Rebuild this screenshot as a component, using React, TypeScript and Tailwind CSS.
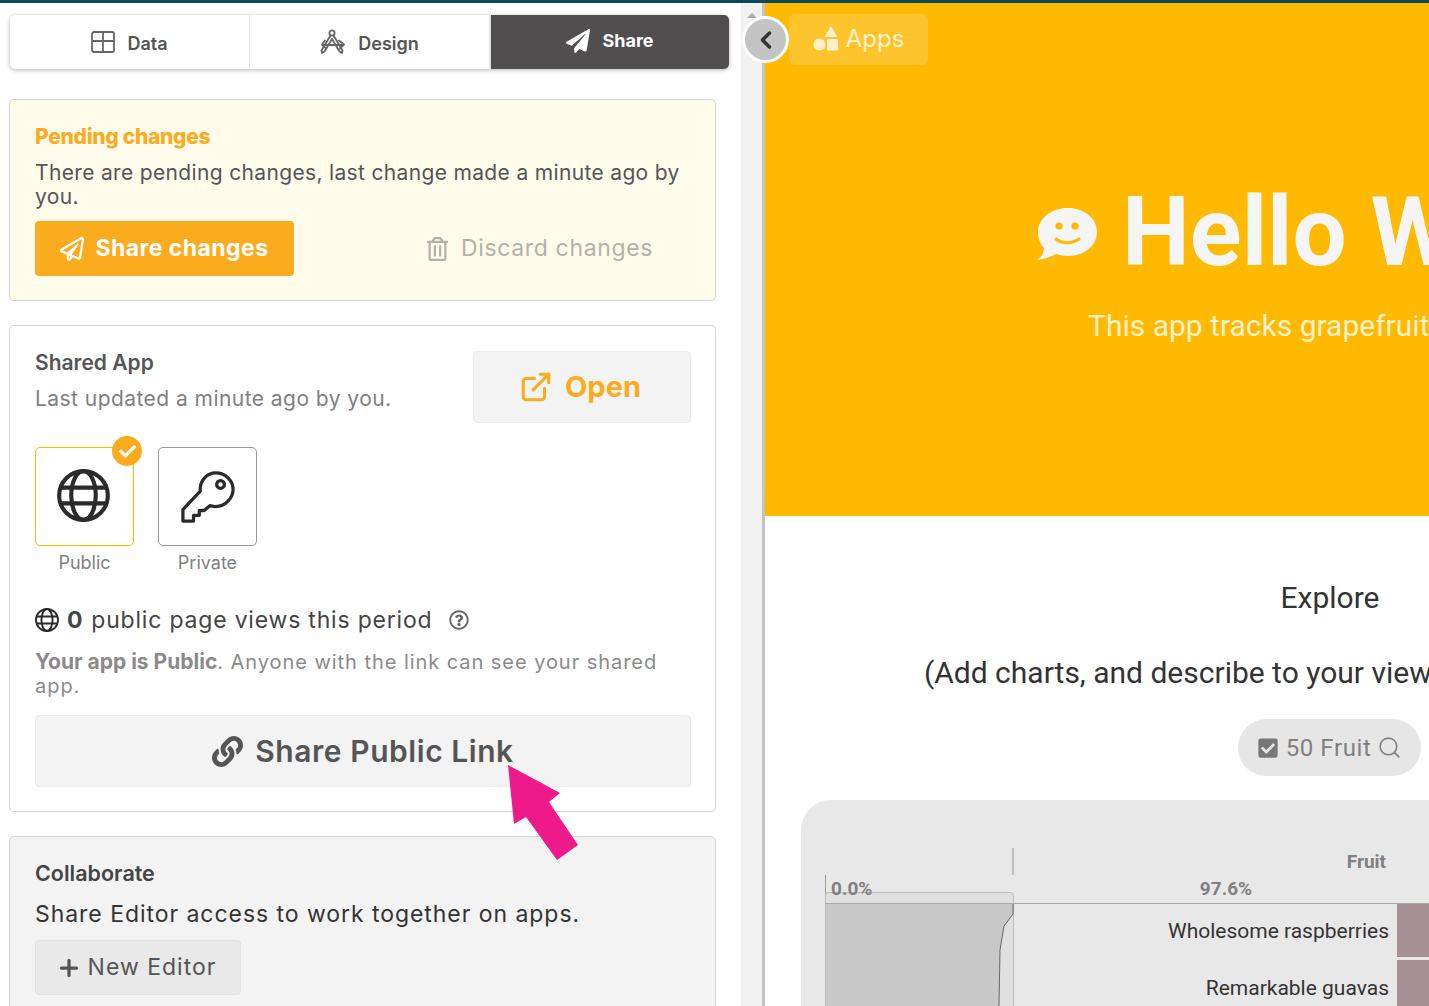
import { ChevronLeft, Search, Plus, ExternalLink } from 'lucide-react';
import { FaPaperPlane, FaRegPaperPlane, FaRegTrashAlt, FaLink, FaRegQuestionCircle, FaCheckSquare, FaCheck } from 'react-icons/fa';

const GlobeIcon = ({ className }: { className?: string }) => (
  <svg viewBox="0 0 54 54" className={className} fill="none" stroke="currentColor" strokeWidth="4.2">
    <circle cx="27" cy="27" r="24.800" />
    <ellipse cx="27" cy="27" rx="12.500" ry="24.800" />
    <path d="M4.500 19h45M4.500 35h45" />
  </svg>
);

const KeyIcon = () => (
  <svg viewBox="0 0 56 56" className="w-[54px] h-[54px] text-[#2b2b2b]" fill="none" stroke="currentColor" strokeWidth="3.4" strokeLinejoin="round">
    <path d="M20 22c-1-11 7-19 16-19 10 0 18 8 18 17s-8 18-18 18c-2 0-4-.5-6-1l-6 5h-5v5h-6v6H2V41z" />
    <circle cx="41" cy="15" r="4" />
  </svg>
);

const DesignIcon = () => (
  <svg viewBox="0 0 26 26" className="w-[26px] h-[26px] text-[#666]" fill="none" stroke="currentColor" strokeWidth="1.8" strokeLinejoin="round" strokeLinecap="round">
    <circle cx="12" cy="4" r="2.600" />
    <path d="M10.500 6.500 1.500 21.500l.5 2.500 2.500-1.500L12 10M13.500 6.500l9 15-.5 2.500-2.500-1.500L12 10M2.500 16h19M5 11.500 2 15.500l3 3M19 11.500l5 4-4 4" />
  </svg>
);

const TableIcon = () => (
  <svg viewBox="0 0 24 22" className="w-6 h-[22px] text-[#666]" fill="none" stroke="currentColor" strokeWidth="1.8">
    <rect x="1" y="1" width="22" height="20" rx="2" />
    <path d="M1 10h22M12 1v20" />
  </svg>
);

const AppsIcon = () => (
  <svg viewBox="0 0 26 26" className="w-[26px] h-[26px] text-[#fff1cc]" fill="currentColor">
    <path d="M18 0 24.500 11h-13z" />
    <circle cx="6.500" cy="18.500" r="6" />
    <rect x="14" y="13" width="11" height="11.500" rx="1" />
  </svg>
);

const SmileBubble = () => (
  <svg viewBox="0 0 60 52" className="mt-[3px] w-[60px] h-[52px]">
    <path fill="#f5f5f5" d="M31 0c16 0 29 10 29 24S47 48 31 48c-5 0-8-1-12-2-4 2-10 5-19 6 4-3 7-7 7-12C3 36 1 30 1 24 1 10 15 0 31 0z" />
    <circle cx="22" cy="18" r="3.600" fill="#ffb900" />
    <circle cx="38" cy="18" r="3.600" fill="#ffb900" />
    <path d="M19 31c6 5 16 5 23 0" fill="none" stroke="#ffb900" strokeWidth="3" strokeLinecap="round" />
  </svg>
);

function Tabs() {
  return (
    <div className="ml-[10px] mt-3 flex h-[54px] w-[719px] rounded-[5px] bg-white shadow-[0_1px_4px_rgba(0,0,0,0.3)]">
      <div className="flex w-[240px] items-center justify-center gap-3 border-r border-[#e4e4e4] text-[18px] font-semibold text-[#555]">
        <TableIcon />
        <span className="pt-[2px]">Data</span>
      </div>
      <div className="flex w-[241px] items-center justify-center gap-3 border-r-2 border-[#e4e4e4] text-[18px] font-semibold text-[#555]">
        <DesignIcon />
        <span className="pt-[2px]">Design</span>
      </div>
      <div className="flex flex-1 items-center justify-center gap-3 rounded-r-[5px] bg-[#504e4f] pb-[3px] text-[18px] font-bold text-white">
        <FaPaperPlane className="w-6 h-6" />
        <span>Share</span>
      </div>
    </div>
  );
}

function PendingCard() {
  return (
    <div className="ml-[9px] mt-[30px] h-[202px] w-[707px] rounded-[5px] border border-[#d8d4c8] bg-[#fffcec] pl-[25px] pr-[24px] pt-[24px]">
      <div className="text-[21px] leading-[26px] font-extrabold tracking-[-0.3px] text-[#faab1e]">Pending changes</div>
      <p className="mt-[11px] text-[21px] leading-[24px] tracking-[0.34px] text-[#555]">
        There are pending changes, last change made a minute ago by you.
      </p>
      <div className="mt-3 flex items-center">
        <div className="flex h-[55px] w-[259px] items-center justify-center gap-[11px] rounded-[4px] bg-[#faab1e] text-[23px] font-bold tracking-[0.45px] text-white">
          <FaRegPaperPlane className="w-6 h-6" />
          <span>Share changes</span>
        </div>
        <div className="ml-[133px] flex items-center gap-[13px] text-[23px] tracking-[0.65px] text-[#b3b1a9]">
          <FaRegTrashAlt className="w-[21px] h-[24px]" />
          <span>Discard changes</span>
        </div>
      </div>
    </div>
  );
}

function SharedCard() {
  return (
    <div className="ml-[9px] mt-6 h-[487px] w-[707px] rounded-[5px] border border-[#d5d5d5] bg-white pl-[25px] pr-[24px] pt-[25px]">
      <div className="flex justify-between">
        <div>
          <div className="text-[21px] leading-[24px] font-semibold text-[#555]">Shared App</div>
          <div className="mt-[12px] text-[21px] leading-[24px] tracking-[0.45px] text-[#808080]">Last updated a minute ago by you.</div>
        </div>
        <div className="flex h-[72px] w-[218px] items-center justify-center gap-3 rounded-[4px] border border-[#ececec] bg-[#f3f3f3] pr-1 text-[29px] font-bold text-[#faab1e]">
          <ExternalLink className="w-[34px] h-[34px]" strokeWidth={2.2} />
          <span>Open</span>
        </div>
      </div>

      <div className="mt-[24px] flex gap-6">
        <div className="flex w-[99px] flex-col items-center">
          <div className="relative flex h-[99px] w-[99px] items-center justify-center rounded-[5px] border border-amber-400 text-[#2b2b2b]">
            <GlobeIcon className="-ml-[2px] -mt-[2px] w-[53px] h-[53px]" />
            <div className="absolute -right-[9px] -top-[12px] flex h-[30px] w-[30px] items-center justify-center rounded-full bg-[#faab1e] text-white">
              <FaCheck className="w-[17px] h-[17px]" />
            </div>
          </div>
          <div className="mt-[6px] text-[18px] leading-[22px] text-[#808080]">Public</div>
        </div>
        <div className="flex w-[99px] flex-col items-center">
          <div className="flex h-[99px] w-[99px] items-center justify-center rounded-[5px] border border-[#999]">
            <KeyIcon />
          </div>
          <div className="mt-[6px] text-[18px] leading-[22px] text-[#808080]">Private</div>
        </div>
      </div>

      <div className="mt-[32px] flex h-[28px] items-center text-[23px] tracking-[0.8px] text-[#444]">
        <GlobeIcon className="w-6 h-6 text-[#2b2b2b]" />
        <span className="ml-2 font-bold">0</span>
        <span className="ml-[8px]">public page views this period</span>
        <FaRegQuestionCircle className="ml-[17px] w-5 h-5 text-[#666]" />
      </div>

      <p className="mt-[16px] text-[20px] leading-[24px] tracking-[0.95px] text-[#8a8a8a]">
        <span className="text-[21px] font-bold tracking-normal">Your app is Public</span>. Anyone with the link can see your shared app.
      </p>

      <div className="mt-[17px] flex h-[72px] w-[656px] items-center justify-center gap-[12px] rounded-[4px] border border-[#ececec] bg-[#f3f3f3] text-[30px] font-semibold tracking-[0.55px] text-[#555]">
        <FaLink className="w-[31px] h-[31px]" />
        <span>Share Public Link</span>
      </div>
    </div>
  );
}

function CollaborateCard() {
  return (
    <div className="ml-[9px] mt-6 h-[200px] w-[707px] rounded-[5px] border border-[#d5d5d5] bg-[#f3f3f3] pl-[25px] pr-[24px] pt-[23px]">
      <div className="text-[21.500px] leading-[26px] font-semibold text-[#444]">Collaborate</div>
      <div className="mt-[15px] text-[23px] leading-[26px] tracking-[0.95px] text-[#333]">Share Editor access to work together on apps.</div>
      <div className="mt-[13px] flex h-[55px] w-[206px] items-center justify-center gap-[6px] rounded-[4px] border border-[#e2e2e2] bg-[#e9e9e9] pr-1 text-[23px] tracking-[1px] text-[#555]">
        <Plus className="w-[26px] h-[26px]" strokeWidth={3} />
        <span>New Editor</span>
      </div>
    </div>
  );
}

function FruitChart() {
  // chart coordinates are relative to the grey card's top-left
  return (
    <svg className="block h-[260px] w-[628px]" viewBox="0 0 628 260" fontFamily="Roboto, sans-serif">
      <path d="M212 48v27M24.500 75v185" stroke="#999" fill="none" />
      <rect x="24.500" y="92.500" width="188" height="167" rx="3" fill="#e0e0e0" stroke="#bbb" />
      <text x="585" y="68" textAnchor="end" fontSize="19" fontWeight="700" fill="#808080">Fruit</text>
      <text x="30" y="95" fontSize="19" fontWeight="700" fill="#808080">0.0%</text>
      <text x="425" y="95" textAnchor="middle" fontSize="19" fontWeight="700" fill="#808080">97.6%</text>
      <path d="M24 103.500h604" stroke="#a8a8a8" fill="none" />
      <path d="M25 104h187v10l-9 12-4 24-2 110H25z" fill="#c8c8c8" />
      <path d="M212 104v10l-9 12-4 24-2 110" fill="none" stroke="#666" />
      <text x="588" y="138" textAnchor="end" fontSize="21" fill="#333">Wholesome raspberries</text>
      <text x="588" y="195" textAnchor="end" fontSize="21" fill="#333">Remarkable guavas</text>
      <rect x="596" y="104" width="32" height="53" fill="#a59095" />
      <rect x="596" y="160" width="32" height="100" fill="#a59095" />
    </svg>
  );
}

function Preview() {
  return (
    <div className="relative h-full min-w-0 flex-1 overflow-hidden bg-white font-['Roboto',sans-serif]">
      <div className="h-[513px] w-[1130px] bg-[#ffb900] pt-[174px] pl-[272px] text-[#f5f5f5]">
        <div className="flex items-center gap-[25px]">
          <SmileBubble />
          <span className="whitespace-nowrap text-[96px] leading-[110px] font-bold">Hello World</span>
        </div>
        <div className="ml-[51px] mt-[22px] whitespace-nowrap text-[30px] leading-[34px] text-[#fff1cc]">This app tracks grapefruit sales by fruit</div>
      </div>
      <div className="w-[1130px] pt-[64px] text-center text-[30px] leading-[36px] text-[#333]">Explore</div>
      <div className="ml-[159px] mt-[39px] whitespace-nowrap text-[30px] leading-[36px] text-[#333]">(Add charts, and describe to your viewers what they can see)</div>
      <div className="ml-[473px] mt-[28px] flex h-[57px] w-[183px] items-center justify-center gap-[7px] rounded-full bg-[#e6e6e6] text-[24px] tracking-[0.6px] text-[#808080]">
        <FaCheckSquare className="w-[22px] h-[22px] text-[#777]" />
        <span>50 Fruit</span>
        <Search className="-ml-[1px] w-[25px] h-[25px]" strokeWidth={1.5} />
      </div>
      <div className="ml-[36px] mt-6 w-[1000px] overflow-hidden rounded-[30px] bg-[#e8e8e8]">
        <FruitChart />
      </div>
      <div className="absolute left-[24px] top-[11px] flex h-[51px] w-[139px] items-center justify-center gap-[7px] rounded-[6px] bg-[#ffc32b] pb-[2px] text-[24px] text-[#fff1cc] font-['Inter',sans-serif]">
        <AppsIcon />
        <span>Apps</span>
      </div>
    </div>
  );
}

export default function App() {
  return (
    <div className="relative flex h-[1006px] w-[1429px] flex-col overflow-hidden bg-white font-['Inter','Liberation_Sans',sans-serif]">
      <div className="h-[3px] shrink-0 bg-[#0b4a55]" />
      <div className="flex min-h-0 flex-1">
        <div className="w-[741px] shrink-0 overflow-hidden bg-white">
          <Tabs />
          <PendingCard />
          <SharedCard />
          <CollaborateCard />
        </div>
        <div className="w-[21px] shrink-0 bg-[#f1f1f1]" />
        <div className="w-[3px] shrink-0 bg-[#c4c4c4]" />
        <Preview />
      </div>
      {/* scroll arrow peeking above the collapse handle */}
      <div className="absolute left-[747px] top-[13px] h-0 w-0 border-x-[5px] border-b-[5px] border-x-transparent border-b-[#aaa]" />
      {/* collapse handle sits over the divider */}
      <div className="absolute left-[742px] top-[16px] flex h-[47px] w-[47px] items-center justify-center rounded-full border-[3px] border-white bg-[#c4c4c4] text-[#333]">
        <ChevronLeft className="w-7 h-7" strokeWidth={3} />
      </div>
      {/* annotation arrow */}
      <svg className="absolute left-[500px] top-[760px] h-[105px] w-[85px]" viewBox="500 760 85 105">
        <polygon fill="#ee1a8c" points="508,765 560,793 549,802 578,845 557,860 526,817 514,824" />
      </svg>
    </div>
  );
}
